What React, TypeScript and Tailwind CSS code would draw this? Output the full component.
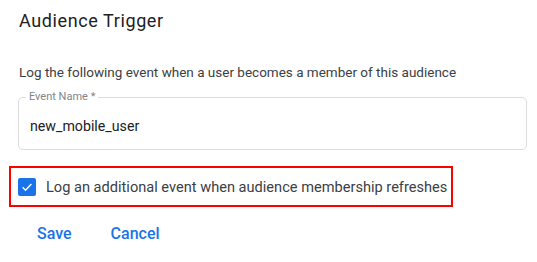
import React from "react";

export default function App() {
  return (
    <div className="w-[537px] h-[262px] bg-white font-['Roboto',sans-serif] overflow-hidden">
      <div className="flex flex-col pl-[19px] pr-[10px] pt-[9px]">
        <h1 className="text-[18px] leading-[24px] tracking-[0.6px] text-[#202124] font-normal whitespace-nowrap">
          Audience Trigger
        </h1>
        <p className="mt-[29px] text-[13.5px] leading-[20px] text-[#3c4043] whitespace-nowrap">
          Log the following event when a user becomes a member of this audience
        </p>
        <div className="relative mt-[15px] ml-[-1px] h-[53px] w-[509px] rounded-[5px] border border-[#dadce0]">
          <span className="absolute left-[7px] top-[-8px] bg-white px-[3px] text-[11px] leading-[14px] text-[#80868b] whitespace-nowrap">
            Event Name *
          </span>
          <div className="pl-[11px] pt-[18px] text-[14.2px] leading-[20px] text-[#202124] whitespace-nowrap">
            new_mobile_user
          </div>
        </div>
        <div className="mt-[16px] ml-[-10px] flex h-[41px] w-[444px] items-center border-2 border-[#ff0000] pl-[7px]">
          <span className="flex h-[18px] w-[18px] shrink-0 items-center justify-center rounded-[2px] bg-[#1a73e8]">
            <svg width="14" height="14" viewBox="0 0 24 24" fill="none">
              <path d="M4.5 12.5l5 5L19.5 7" stroke="white" strokeWidth="2.4" />
            </svg>
          </span>
          <span className="ml-[10px] text-[14.6px] leading-[20px] text-[#3c4043] whitespace-nowrap">
            Log an additional event when audience membership refreshes
          </span>
        </div>
        <div className="mt-[17px] flex items-center gap-[39px] pl-[18px] text-[16px] font-medium leading-[20px] text-[#1a73e8]">
          <span>Save</span>
          <span>Cancel</span>
        </div>
      </div>
    </div>
  );
}
